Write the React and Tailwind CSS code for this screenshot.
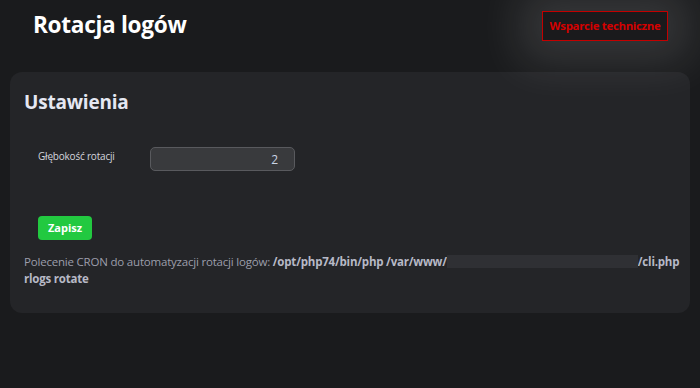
export default function App() {
  return (
    <div
      className="min-h-screen w-full bg-[#1a1b1d] text-white"
      style={{ fontFamily: '"Open Sans", "Noto Sans", sans-serif' }}
    >
      <header className="flex h-[72px] items-start justify-between pl-[33px] pr-[32px]">
        <h1 className="mt-[9px] text-[22.6px] font-bold leading-[32px] tracking-[-0.3px] text-white">
          Rotacja logów
        </h1>
        <a
          href="#"
          className="mt-[11px] flex h-[30px] w-[126px] items-center justify-center border border-[#c40000] bg-[#1a1a1c] text-[11.4px] font-bold tracking-[-0.3px] text-[#d40000] shadow-[0_0_45px_22px_rgba(255,255,255,0.12)]"
        >
          Wsparcie techniczne
        </a>
      </header>

      <main className="mx-[10px] h-[241px] rounded-[12px] bg-[#242528] pl-[14px] pr-[4px] pt-[16px]">
        <h2 className="text-[19px] font-bold leading-[28px] tracking-[-0.2px] text-[#e4e7f2]">
          Ustawienia
        </h2>

        <div className="mt-[31px] flex items-center pl-[14px]">
          <label className="w-[112px] pb-[6px] text-[10px] tracking-[-0.2px] text-[#d4d6de]">
            Głębokość rotacji
          </label>
          <input
            type="text"
            defaultValue="2"
            className="h-[24px] w-[145px] rounded-[5px] border border-[#595a5e] bg-[#393a3d] px-[16px] text-right text-[12px] text-[#c9d4e4] outline-none"
          />
        </div>

        <div className="mt-[43px] pl-[14px]">
          <button className="h-[24px] w-[54px] rounded-[4px] bg-[#22c940] text-[11px] font-bold text-white">
            Zapisz
          </button>
        </div>

        <p className="mt-[13px] text-[11.5px] leading-[17px] tracking-[-0.2px] text-[#9c9eab]">
          Polecenie CRON do automatyzacji rotacji logów:{" "}
          <span className="font-bold text-[#b7b9c6]">
            /opt/php74/bin/php /var/www/
            <span className="inline-block h-[13px] w-[191px] translate-y-[2px] bg-[#2f3034]" />
            /cli.php rlogs rotate
          </span>
        </p>
      </main>
    </div>
  );
}
